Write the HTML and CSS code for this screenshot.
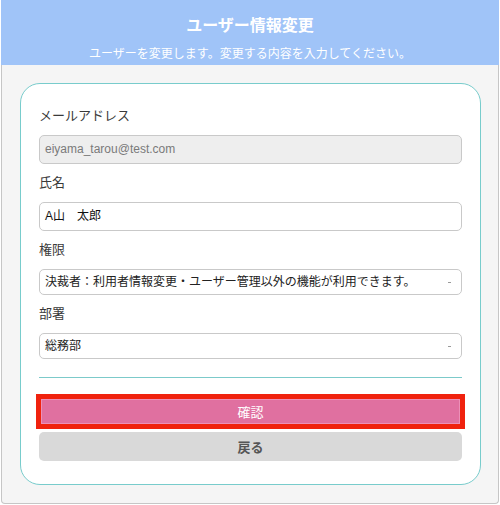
FILE: index.html
```html
<!DOCTYPE html>
<html lang="ja">
<head>
<meta charset="utf-8">
<title>ユーザー情報変更</title>
<link rel="stylesheet" href="styles.css">
</head>
<body>
<div class="frame">
  <header class="header">
    <h1 class="title">ユーザー情報変更</h1>
    <p class="subtitle">ユーザーを変更します。変更する内容を入力してください。</p>
  </header>
  <main class="content">
    <form class="card">
      <label class="label">メールアドレス</label>
      <div class="field field-disabled">eiyama_tarou@test.com</div>
      <label class="label">氏名</label>
      <div class="field">A山　太郎</div>
      <label class="label">権限</label>
      <div class="select">決裁者：利用者情報変更・ユーザー管理以外の機能が利用できます。</div>
      <label class="label">部署</label>
      <div class="select">総務部</div>
      <hr class="divider">
      <div class="actions">
        <button type="button" class="btn btn-primary">確認</button>
        <button type="button" class="btn btn-back">戻る</button>
      </div>
    </form>
  </main>
</div>
</body>
</html>
```

FILE: styles.css
```css
* { box-sizing: border-box; }
html, body { margin: 0; padding: 0; background: #ffffff; }
body {
  font-family: "Liberation Sans", "Noto Sans CJK JP", sans-serif;
  color: #333333;
}
.frame {
  margin-left: 1px;
  width: 498px;
  height: 504px;
  border: 1px solid #c6c6c6;
  border-top: none;
  border-radius: 0 0 4px 4px;
  background: #f5f5f5;
  display: flex;
  flex-direction: column;
}
.header {
  height: 65px;
  margin: 0 -1px;
  background: #a0c4f8;
  color: #ffffff;
  text-align: center;
  padding-top: 15px;
}
.title {
  margin: 0;
  font-size: 16px;
  line-height: 22px;
  font-weight: bold;
}
.subtitle {
  margin: 8px 0 0;
  font-size: 12px;
  line-height: 18px;
}
.content {
  padding: 18px 17px 18px 18px;
  flex: 1;
  display: flex;
}
.card {
  flex: 1;
  background: #ffffff;
  border: 1px solid #78cccc;
  border-radius: 20px;
  padding: 13px 18px 22px;
  display: flex;
  flex-direction: column;
}
.label {
  display: block;
  margin: 9px 0;
  font-size: 13px;
  line-height: 20px;
  color: #3a3a3a;
}
.field {
  height: 29px;
  border: 1px solid #c9c9c9;
  border-radius: 5px;
  padding: 0 5px;
  font-size: 12px;
  line-height: 27px;
  color: #111111;
  background: #ffffff;
}
.field-disabled {
  background: #eeeeee;
  color: #7a7a7a;
}
.select {
  position: relative;
  height: 26px;
  border: 1px solid #c9c9c9;
  border-radius: 5px;
  padding: 0 5px;
  font-size: 12px;
  line-height: 24px;
  color: #222222;
  background: #ffffff;
}
.select::after {
  content: "";
  position: absolute;
  right: 10px;
  top: 12px;
  width: 3px;
  height: 1px;
  background: #9a9a9a;
}
.divider {
  margin: 18px 0 19px;
  border: none;
  border-top: 1px solid #7ccaca;
  height: 0;
}
.actions {
  display: flex;
  flex-direction: column;
  gap: 6px;
}
.btn {
  height: 29px;
  border: none;
  border-radius: 5px;
  font-family: "Liberation Sans", "Noto Sans CJK JP", sans-serif;
  font-size: 13px;
  padding: 0;
  cursor: pointer;
}
.btn-primary {
  background: #e070a0;
  color: #ffffff;
  border-radius: 0;
  box-shadow: 0 0 0 3px #f0220e, inset 0 0 0 2px #f0220e, inset 0 0 0 3px #ec90b8;
}
.btn-back {
  background: #d9d9d9;
  color: #555555;
  font-weight: bold;
}
```
